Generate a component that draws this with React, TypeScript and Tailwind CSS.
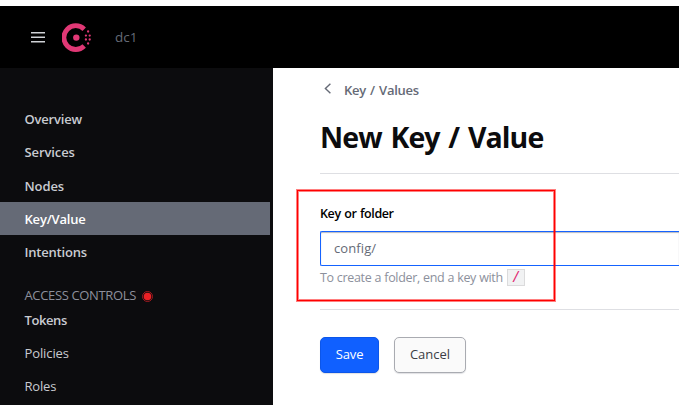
const mainLinks = [
  { label: 'Overview', cls: 'tracking-[-0.2px]' },
  { label: 'Services', cls: 'tracking-[-0.1px]' },
  { label: 'Nodes', cls: 'tracking-[-0.1px] pt-0.5' },
  { label: 'Key/Value', cls: 'tracking-[-0.2px] pt-0.5', active: true },
  { label: 'Intentions', cls: 'tracking-[-0.2px] pt-0.5' },
];

const accessLinks = [
  { label: 'Tokens', cls: 'font-semibold tracking-[-0.4px]' },
  { label: 'Policies', cls: 'tracking-[-0.1px]' },
  { label: 'Roles', cls: 'tracking-[-0.2px]' },
];

function ConsulLogo() {
  return (
    <svg className="ml-[17px] size-[30px]" viewBox="0 0 30 30" fill="#e03875">
      <path d="M22.2 7.2A11.9 11.9 0 1 0 22.2 24" fill="none" stroke="#e03875" strokeWidth="4.8" />
      <circle cx="14.3" cy="15.6" r="3.2" />
      <circle cx="26.1" cy="9.5" r="1.15" />
      <circle cx="23.9" cy="13.6" r="1.15" />
      <circle cx="27.7" cy="13.6" r="1.15" />
      <circle cx="23.9" cy="17.5" r="1.15" />
      <circle cx="27.7" cy="17.5" r="1.15" />
      <circle cx="26.1" cy="21.5" r="1.15" />
    </svg>
  );
}

export default function App() {
  return (
    <div className="relative flex h-[405px] w-[679px] flex-col overflow-hidden bg-white pt-1.5 font-['Open_Sans','Noto_Sans',sans-serif] text-[13px] whitespace-nowrap">
      <header className="flex h-[62px] shrink-0 items-center bg-black pl-[31px]">
        <svg className="h-[11px] w-[14px]" viewBox="0 0 14 11" fill="#d0d2d6">
          <rect y="0" width="14" height="1.5" />
          <rect y="4.5" width="14" height="1.5" />
          <rect y="9" width="14" height="1.5" />
        </svg>
        <ConsulLogo />
        <span className="ml-[23px] text-[13.5px] leading-5 text-[#656a76]">dc1</span>
      </header>

      <div className="flex min-h-0 flex-1">
        <nav className="w-[273px] shrink-0 bg-[#0c0c0e] pt-[35px] text-[#c9cbd1]">
          {mainLinks.map((l) => (
            <div
              key={l.label}
              className={`flex h-[33px] w-[270px] items-center pl-[24.5px] font-semibold ${l.cls} ${l.active ? 'bg-[#656a76] text-white' : ''}`}
            >
              {l.label}
            </div>
          ))}
          <div className="mt-[18px] flex h-5 items-center pl-[24.5px] text-[#8c909c]">
            <span className="w-[112px] tracking-[-0.35px]">ACCESS CONTROLS</span>
            <svg className="ml-[5.5px] size-[11px]" viewBox="0 0 11 11">
              <circle cx="5.5" cy="5.5" r="5" fill="none" stroke="#b01c22" strokeWidth="0.9" />
              <circle cx="5.5" cy="5.5" r="3.8" fill="#ec2025" />
            </svg>
          </div>
          <div className="-mt-[2px]">
            {accessLinks.map((l) => (
              <div key={l.label} className={`flex h-[33px] items-center pl-[24.5px] ${l.cls}`}>
                {l.label}
              </div>
            ))}
          </div>
        </nav>

        <main className="flex min-w-0 flex-1 flex-col pl-[47px]">
          <div className="mt-3 flex h-5 items-center pl-1 font-semibold text-[#656a76]">
            <svg className="mb-1 h-[11px] w-[7px]" viewBox="0 0 7 11" fill="none" stroke="#656a76" strokeWidth="1.4">
              <path d="M6.4 .7 1.4 5.5l5 4.8" />
            </svg>
            <span className="ml-[13px] pt-0.5 tracking-[-0.25px] [word-spacing:1px]">Key / Values</span>
          </div>
          <h1 className="mt-[17px] h-10 text-[28.5px] leading-10 font-bold tracking-[-0.93px] text-[#0c0c0e] [word-spacing:2.3px]">New Key / Value</h1>
          <hr className="mt-4 border-[#dedfe3]" />
          <label className="mt-[30px] h-5 text-[12.5px] leading-5 font-semibold tracking-[-0.4px] text-black [word-spacing:0.7px]">Key or folder</label>
          <div className="mt-[7px] flex h-[35px] shrink-0 items-center rounded-l-[2px] border border-r-0 border-[#1563ff] pl-[13px] text-[#656a76] shadow-[inset_0_1px_1px_#b8bac0]">
            <span className="tracking-[0.1px]">config/</span>
          </div>
          <div className="mt-[2px] flex h-5 items-center text-[12.5px] text-[#8c909c]">
            <span className="w-[183px] tracking-[-0.33px] [word-spacing:0.2px]">To create a folder, end a key with</span>
            <code className="mb-0.5 ml-1 flex h-[17px] w-[18px] items-center justify-center border border-[#dbdbdc] bg-[#f1f2f3] pt-0.5 font-['Liberation_Mono',monospace] text-[14px] text-[#e0226e]">/</code>
          </div>
          <hr className="mt-[21px] border-[#dedfe3]" />
          <div className="mt-[27px] flex gap-[15px]">
            <button className="h-9 w-[59px] rounded-[5px] border border-[#0c56e9] bg-[#1060ff] text-white shadow-[0_1px_1px_#656a7633]">
              <span className="tracking-[-0.1px]">Save</span>
            </button>
            <button className="h-9 w-[72px] rounded-[5px] border border-[#a9abb1] bg-[#fafafa] text-[#3b3d45] shadow-[0_1px_1px_#656a7633]">
              <span>Cancel</span>
            </button>
          </div>
        </main>
      </div>

      <div className="pointer-events-none absolute top-[190px] left-[297px] h-[111px] w-[258px] border border-[#ff0000] shadow-[0_0_0_1px_#ff000080,inset_0_0_0_1px_#ff000080]" />
    </div>
  );
}
